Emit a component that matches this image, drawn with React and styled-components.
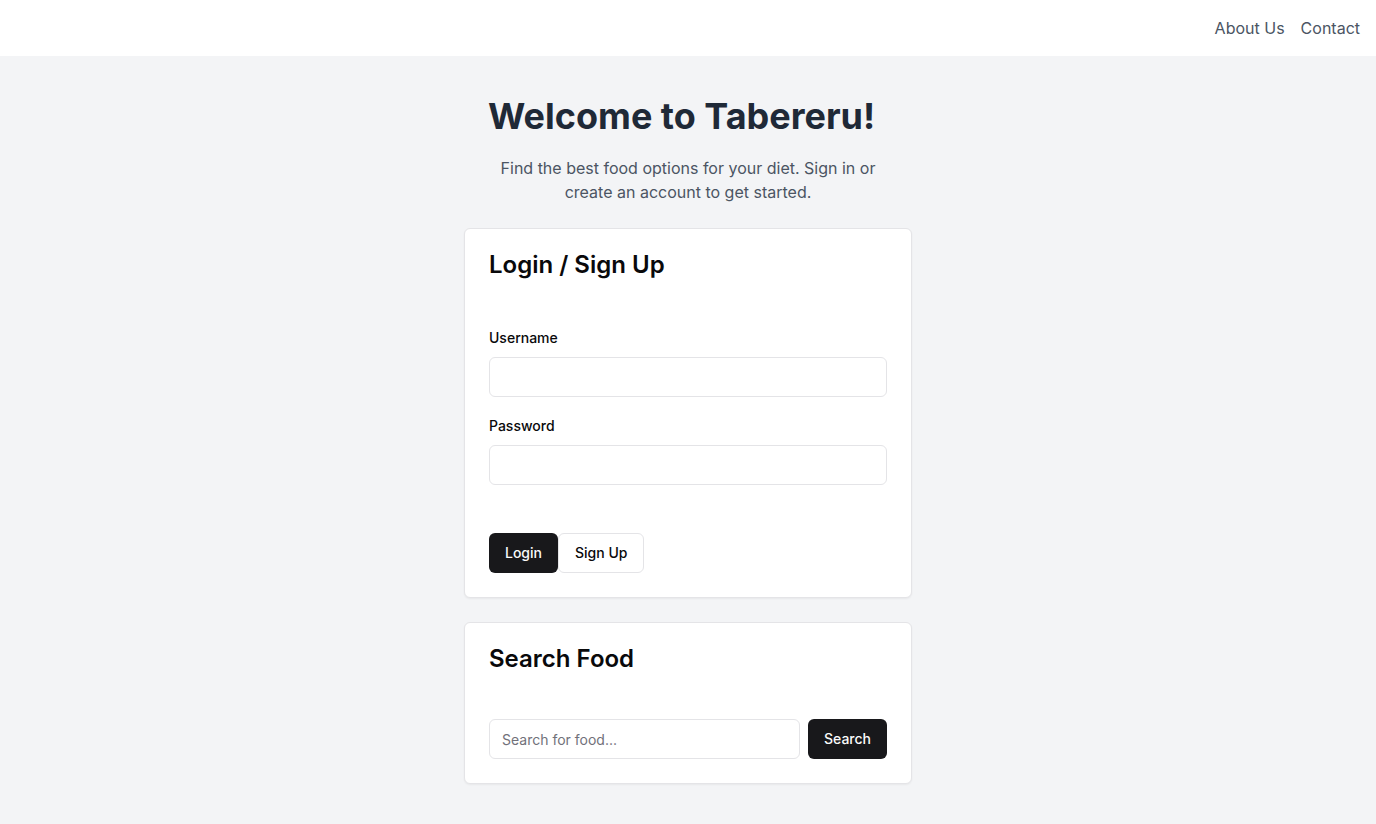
import React from "react";
import styled, { createGlobalStyle, css } from "styled-components";

const GlobalStyle = createGlobalStyle`
  *, *::before, *::after { box-sizing: border-box; }
  body {
    margin: 0;
    background: #f3f4f6;
    color: #09090b;
    font-family: Inter, "Liberation Sans", sans-serif;
    font-size: 16px;
    line-height: 24px;
  }
  h1, h2, p { margin: 0; }
  button, input { font: inherit; color: inherit; }
`;

const Page = styled.div`
  display: flex;
  flex-direction: column;
  min-height: 100vh;
`;

const TopBar = styled.header`
  display: flex;
  justify-content: flex-end;
  padding: 16px;
  background: #ffffff;
`;

const Nav = styled.nav`
  display: flex;
  gap: 16px;
`;

const NavLink = styled.a`
  color: #4b5563;
  text-decoration: none;
`;

const Main = styled.main`
  display: flex;
  flex: 1;
  flex-direction: column;
  align-items: center;
  justify-content: center;
  padding: 40px 16px;
`;

const Column = styled.div`
  display: flex;
  flex-direction: column;
  gap: 24px;
  width: 100%;
  max-width: 448px;
`;

const Intro = styled.section`
  display: flex;
  flex-direction: column;
  gap: 20px;
  padding: 0 24px;
`;

const Title = styled.h1`
  color: #1f2937;
  font-size: 36px;
  font-weight: 700;
  line-height: 40px;
`;

const Lead = styled.p`
  color: #4b5563;
  text-align: center;
`;

const Card = styled.section`
  display: flex;
  flex-direction: column;
  gap: 48px;
  padding: 24px;
  border: 1px solid #e4e4e7;
  border-radius: 6px;
  background: #ffffff;
  box-shadow: 0 1px 2px rgba(0, 0, 0, 0.05);
`;

const CardTitle = styled.h2`
  font-size: 24px;
  font-weight: 600;
  line-height: 24px;
`;

const Form = styled.form`
  display: flex;
  flex-direction: column;
  gap: 48px;
`;

const Fields = styled.div`
  display: flex;
  flex-direction: column;
  gap: 16px;
`;

const Label = styled.label`
  font-size: 14px;
  font-weight: 500;
  line-height: 14px;
`;

const Input = styled.input`
  display: block;
  width: 100%;
  min-width: 0;
  height: 40px;
  padding: 8px 12px;
  border: 1px solid #e4e4e7;
  border-radius: 6px;
  background: #ffffff;
  font-size: 14px;
  line-height: 20px;

  &::placeholder {
    color: #71717a;
    opacity: 1;
  }
`;

const Field = styled.div`
  ${Input} {
    margin-top: 8px;
  }
`;

const Actions = styled.div`
  display: flex;
`;

const SearchRow = styled.form`
  display: flex;
  gap: 8px;
`;

const Button = styled.button`
  flex: none;
  height: 40px;
  padding: 8px 16px;
  border: 0;
  border-radius: 6px;
  background: #18181b;
  color: #fafafa;
  font-size: 14px;
  font-weight: 500;
  line-height: 20px;
  cursor: pointer;

  ${({ $outline }) =>
    $outline &&
    css`
      border: 1px solid #e4e4e7;
      background: #ffffff;
      color: #09090b;
    `}
`;

const keepOnPage = (event) => event.preventDefault();

export default function App() {
  return (
    <Page>
      <GlobalStyle />
      <TopBar>
        <Nav>
          <NavLink href="#about">About Us</NavLink>
          <NavLink href="#contact">Contact</NavLink>
        </Nav>
      </TopBar>
      <Main>
        <Column>
          <Intro>
            <Title>Welcome to Tabereru!</Title>
            <Lead>
              Find the best food options for your diet. Sign in or create an
              account to get started.
            </Lead>
          </Intro>
          <Card>
            <CardTitle>Login / Sign Up</CardTitle>
            <Form onSubmit={keepOnPage}>
              <Fields>
                <Field>
                  <Label htmlFor="username">Username</Label>
                  <Input id="username" type="text" autoComplete="username" />
                </Field>
                <Field>
                  <Label htmlFor="password">Password</Label>
                  <Input
                    id="password"
                    type="password"
                    autoComplete="current-password"
                  />
                </Field>
              </Fields>
              <Actions>
                <Button type="submit">Login</Button>
                <Button type="button" $outline>
                  Sign Up
                </Button>
              </Actions>
            </Form>
          </Card>
          <Card>
            <CardTitle>Search Food</CardTitle>
            <SearchRow role="search" onSubmit={keepOnPage}>
              <Input
                type="search"
                aria-label="Search for food"
                placeholder="Search for food..."
              />
              <Button type="submit">Search</Button>
            </SearchRow>
          </Card>
        </Column>
      </Main>
    </Page>
  );
}
